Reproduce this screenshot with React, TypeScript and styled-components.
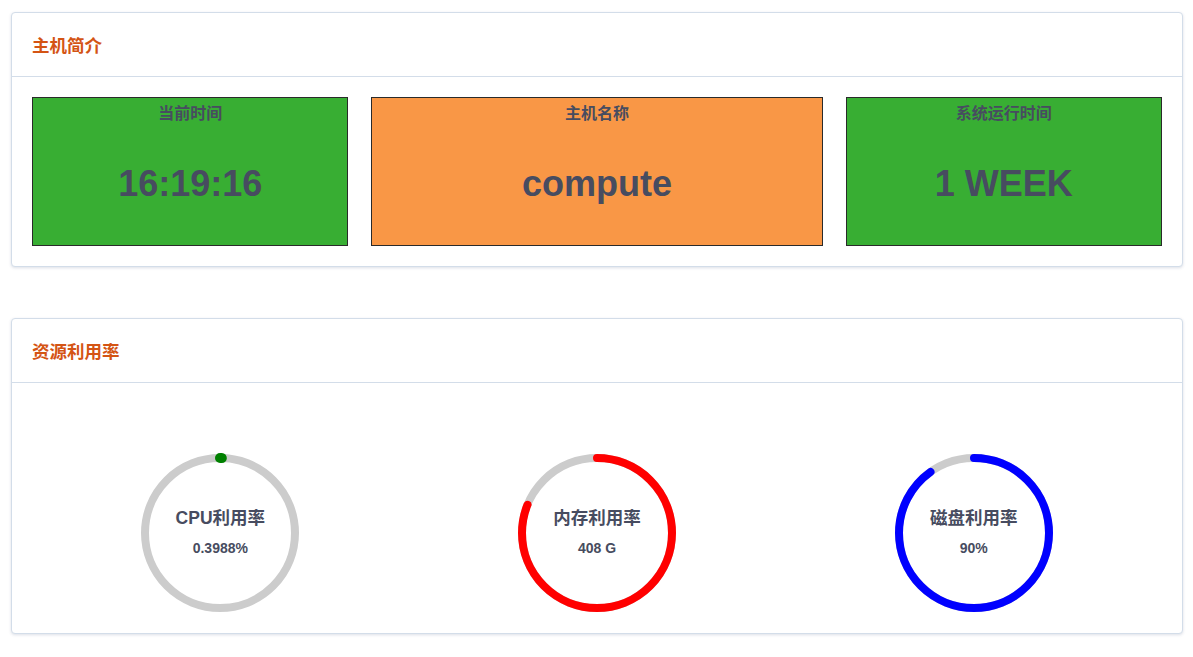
import React from "react";
import styled, { createGlobalStyle } from "styled-components";

const Global = createGlobalStyle`
  html, body { margin: 0; padding: 0; background: #ffffff; }
  body { font-family: "Liberation Sans", "Noto Sans CJK SC", sans-serif; }
`;

const Page = styled.div`
  padding: 12px 10px 20px 11px;
  display: flex;
  flex-direction: column;
  gap: 51px;
`;

const Panel = styled.section`
  border: 1px solid #d3dde9;
  border-radius: 4px;
  background: #fff;
  box-shadow: 0 1px 3px rgba(60, 80, 120, 0.18);
`;

const PanelHeader = styled.div`
  height: 63px;
  display: flex;
  align-items: center;
  padding: 0 20px;
  border-bottom: 1px solid #d3dde9;
`;

const PanelTitle = styled.h3`
  margin: 0;
  font-size: 17.5px;
  font-weight: bold;
  color: #d45414;
`;

const InfoBody = styled.div`
  padding: 20px;
  display: grid;
  grid-template-columns: 28% 40% 28%;
  justify-content: space-between;
`;

const InfoBox = styled.div<{ $bg: string }>`
  background: ${(p) => p.$bg};
  border: 1px solid #2a2a2a;
  height: 147px;
  display: flex;
  flex-direction: column;
  align-items: center;
  color: #474c60;
`;

const InfoLabel = styled.div`
  margin-top: 5px;
  font-size: 16px;
  line-height: 22px;
  font-weight: 600;
`;

const InfoValue = styled.div`
  margin-top: 38px;
  font-size: 36px;
  line-height: 42px;
  font-weight: bold;
`;

const GaugeBody = styled.div`
  padding: 70px 20px 20px;
  display: grid;
  grid-template-columns: repeat(3, 1fr);
`;

const GaugeCell = styled.div`
  display: flex;
  justify-content: center;
`;

const GaugeWrap = styled.div`
  position: relative;
  width: 160px;
  height: 160px;
`;

const GaugeText = styled.div`
  position: absolute;
  inset: 0;
  display: flex;
  flex-direction: column;
  align-items: center;
  justify-content: center;
  color: #474c60;
  font-weight: bold;
`;

const GaugeLabel = styled.div`
  font-size: 17.5px;
  line-height: 22px;
  margin-top: -2px;
`;

const GaugeValue = styled.div`
  font-size: 14px;
  line-height: 18px;
  margin-top: 10px;
`;

type GaugeProps = { label: string; value: string; pct: number; color: string };

const Gauge: React.FC<GaugeProps> = ({ label, value, pct, color }) => {
  const r = 75;
  const c = 2 * Math.PI * r;
  const len = Math.max(pct, 0.0001) / 100 * c;
  return (
    <GaugeWrap>
      <svg width="160" height="160" viewBox="0 0 160 160">
        <circle cx="80" cy="80" r={r} fill="none" stroke="#cccccc" strokeWidth="8" />
        <circle
          cx="80"
          cy="80"
          r={r}
          fill="none"
          stroke={color}
          strokeWidth={pct < 2 ? 10 : 8}
          strokeLinecap="round"
          strokeDasharray={`${len} ${c}`}
          transform="rotate(-90 80 80)"
        />
      </svg>
      <GaugeText>
        <GaugeLabel>{label}</GaugeLabel>
        <GaugeValue>{value}</GaugeValue>
      </GaugeText>
    </GaugeWrap>
  );
};

export default function App() {
  return (
    <>
      <Global />
      <Page>
        <Panel>
          <PanelHeader>
            <PanelTitle>主机简介</PanelTitle>
          </PanelHeader>
          <InfoBody>
            <InfoBox $bg="#38ae33">
              <InfoLabel>当前时间</InfoLabel>
              <InfoValue>16:19:16</InfoValue>
            </InfoBox>
            <InfoBox $bg="#f99746">
              <InfoLabel>主机名称</InfoLabel>
              <InfoValue>compute</InfoValue>
            </InfoBox>
            <InfoBox $bg="#38ae33">
              <InfoLabel>系统运行时间</InfoLabel>
              <InfoValue>1 WEEK</InfoValue>
            </InfoBox>
          </InfoBody>
        </Panel>
        <Panel>
          <PanelHeader>
            <PanelTitle>资源利用率</PanelTitle>
          </PanelHeader>
          <GaugeBody>
            <GaugeCell>
              <Gauge label="CPU利用率" value="0.3988%" pct={0.3988} color="#008000" />
            </GaugeCell>
            <GaugeCell>
              <Gauge label="内存利用率" value="408 G" pct={81} color="#ff0000" />
            </GaugeCell>
            <GaugeCell>
              <Gauge label="磁盘利用率" value="90%" pct={90} color="#0000ff" />
            </GaugeCell>
          </GaugeBody>
        </Panel>
      </Page>
    </>
  );
}
